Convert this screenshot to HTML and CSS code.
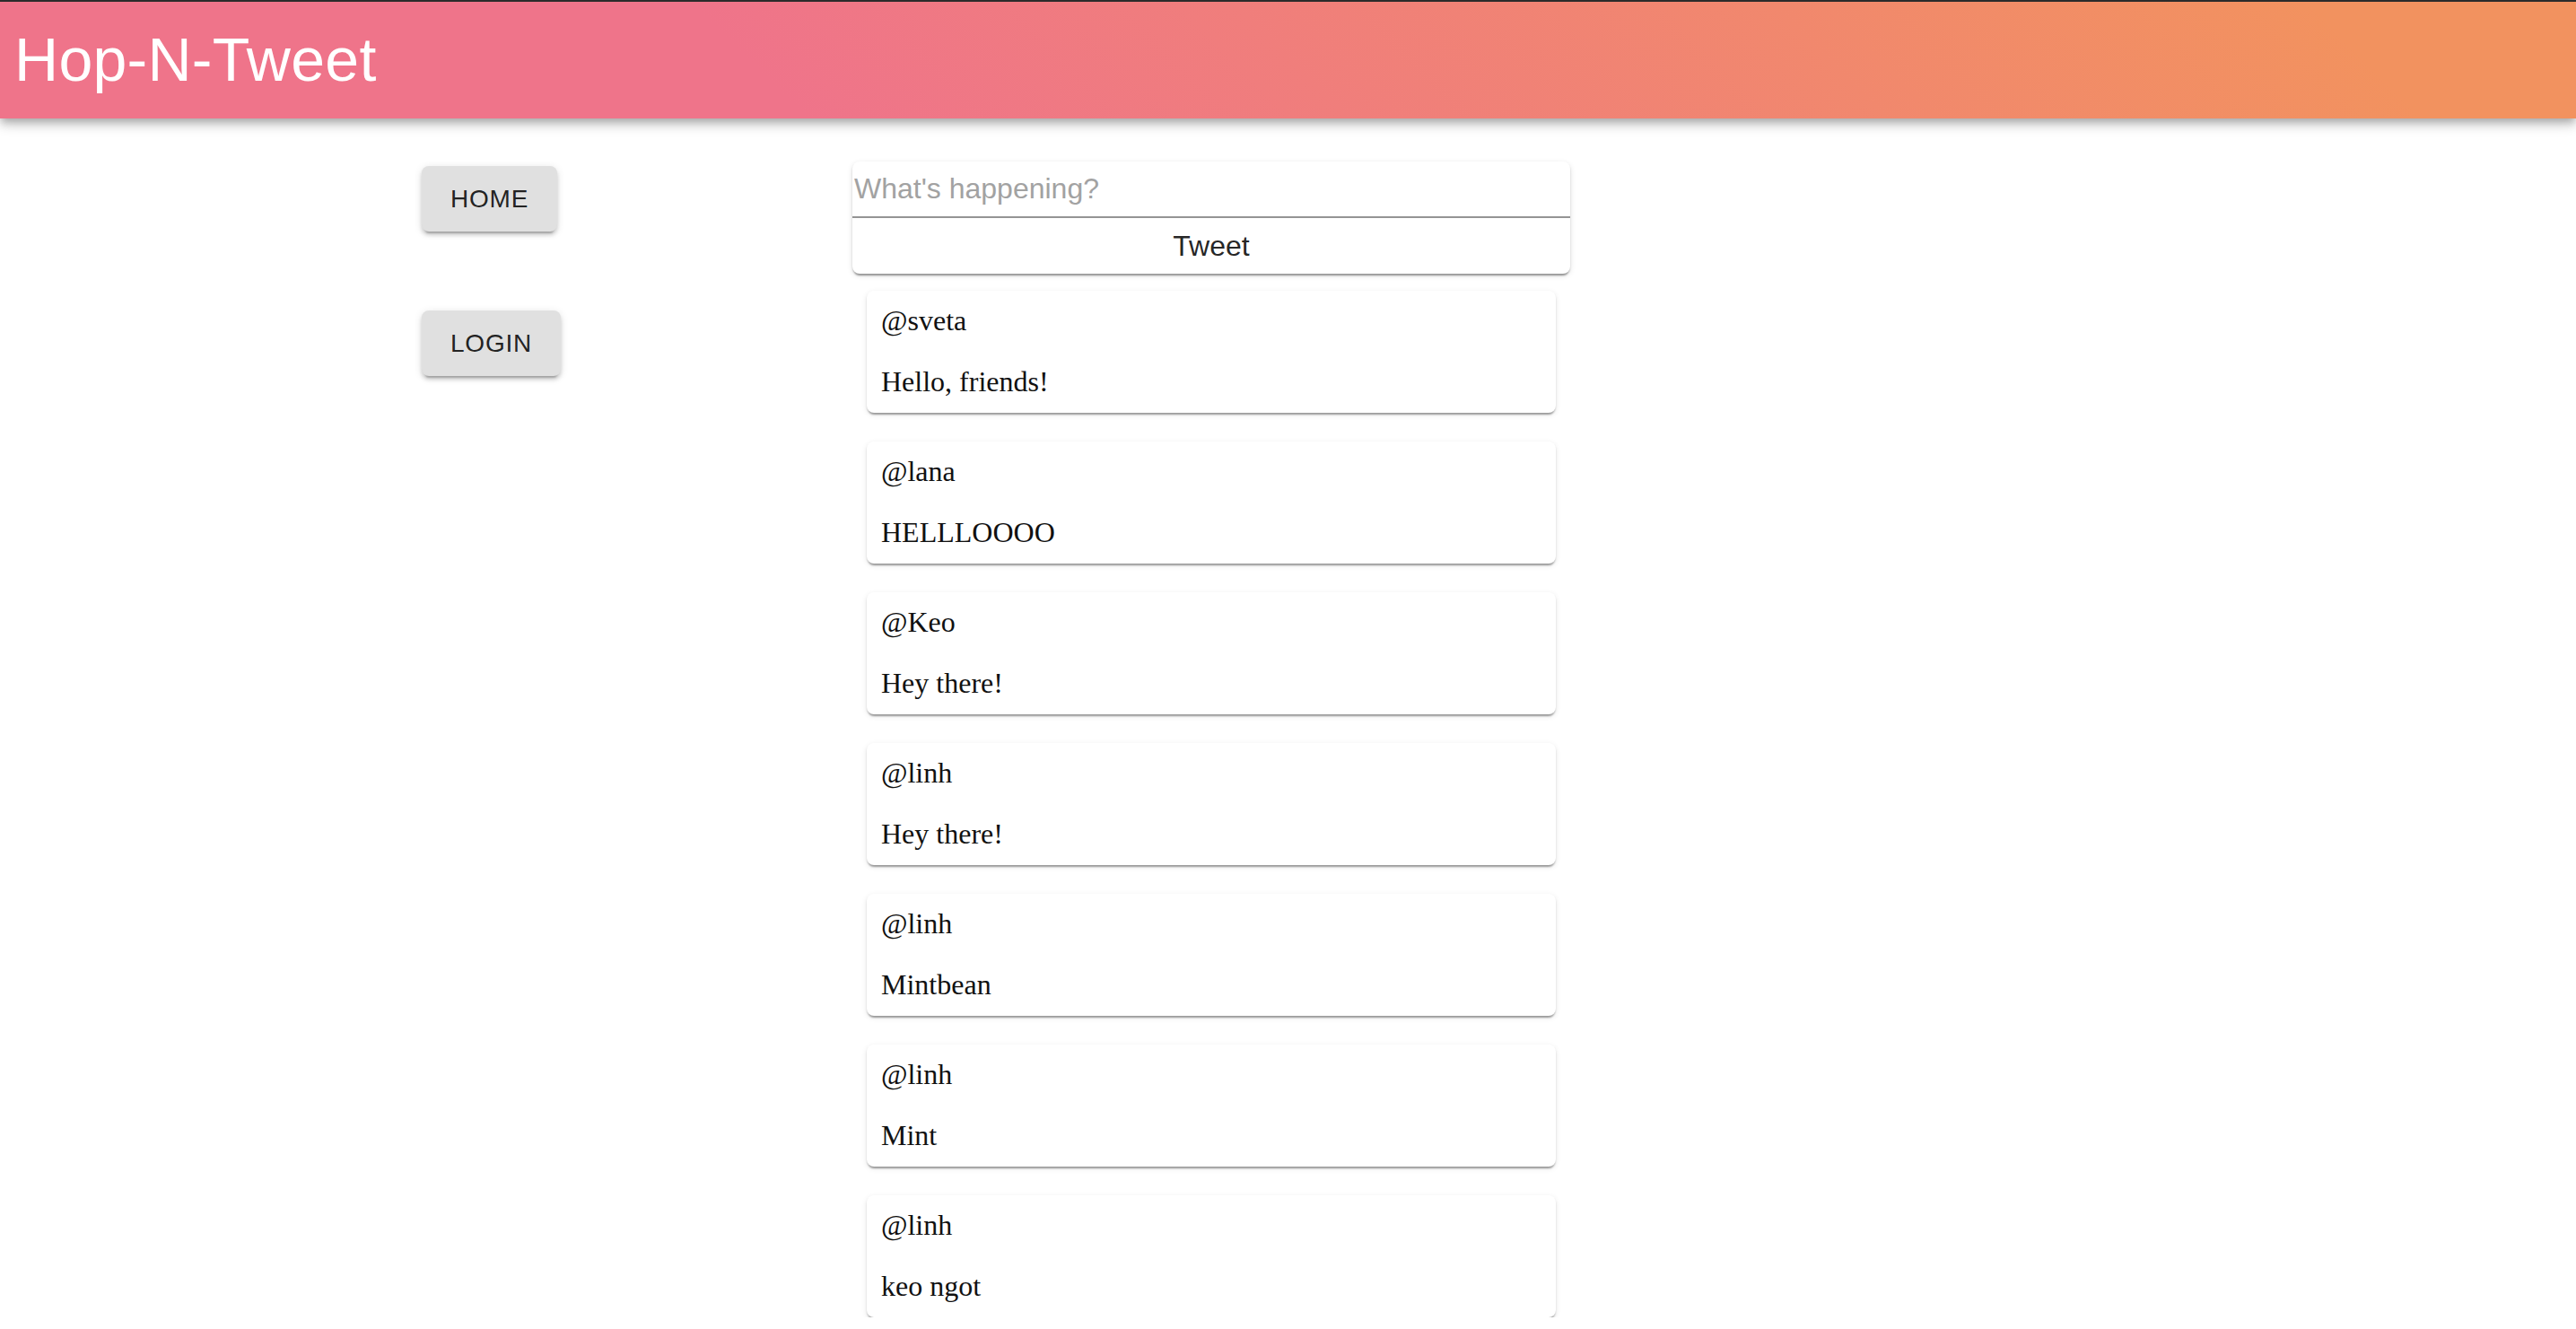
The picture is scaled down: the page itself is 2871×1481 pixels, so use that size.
FILE: index.html
```html
<!DOCTYPE html>
<html lang="en">
<head>
<meta charset="utf-8">
<title>Hop-N-Tweet</title>
<link rel="stylesheet" href="styles.css">
</head>
<body>
<header class="appbar">
  <h1 class="title">Hop-N-Tweet</h1>
</header>
<main class="layout">
  <nav class="sidebar">
    <button class="nav-btn">HOME</button>
    <button class="nav-btn">LOGIN</button>
  </nav>
  <section class="feed">
    <form class="composer">
      <input class="composer-input" type="text" placeholder="What's happening?">
      <button class="composer-btn" type="button">Tweet</button>
    </form>
    <div class="tweets">
      <article class="tweet"><div class="handle">@sveta</div><div class="body">Hello, friends!</div></article>
      <article class="tweet"><div class="handle">@lana</div><div class="body">HELLLOOOO</div></article>
      <article class="tweet"><div class="handle">@Keo</div><div class="body">Hey there!</div></article>
      <article class="tweet"><div class="handle">@linh</div><div class="body">Hey there!</div></article>
      <article class="tweet"><div class="handle">@linh</div><div class="body">Mintbean</div></article>
      <article class="tweet"><div class="handle">@linh</div><div class="body">Mint</div></article>
      <article class="tweet"><div class="handle">@linh</div><div class="body">keo ngot</div></article>
    </div>
  </section>
</main>
</body>
</html>
```
FILE: styles.css
```css
* { box-sizing: border-box; }
body {
  margin: 0;
  background: #fff;
  font-family: "Liberation Sans", Arial, sans-serif;
  color: rgba(0,0,0,0.87);
}
.appbar {
  height: 132px;
  border-top: 2px solid #2b2b2b;
  background: linear-gradient(45deg, #EF748A 30%, #F2925F 90%);
  box-shadow: 0 4px 8px -2px rgba(0,0,0,0.2), 0 8px 10px 0 rgba(0,0,0,0.14), 0 2px 20px 0 rgba(0,0,0,0.12);
  display: flex;
  align-items: center;
  padding-left: 16px;
  position: relative;
  z-index: 2;
}
.title {
  margin: 0 0 2px;
  font-family: "Liberation Sans", Arial, sans-serif;
  font-weight: 400;
  font-size: 68px;
  color: #fff;
  line-height: 1;
  letter-spacing: 0.004em;
}
.layout {
  display: flex;
  padding-left: 470px;
}
.sidebar {
  width: 480px;
  padding-top: 53px;
  display: flex;
  flex-direction: column;
  align-items: flex-start;
  gap: 88px;
}
.nav-btn {
  font-family: "Liberation Sans", Arial, sans-serif;
  font-size: 28px;
  letter-spacing: 0.02857em;
  line-height: 1.75;
  padding: 12px 32px;
  background: #e0e0e0;
  color: rgba(0,0,0,0.87);
  border: 0;
  border-radius: 8px;
  box-shadow: 0 6px 2px -4px rgba(0,0,0,0.2), 0 4px 4px 0 rgba(0,0,0,0.14), 0 2px 10px 0 rgba(0,0,0,0.12);
}
.feed {
  width: 800px;
  padding-top: 48px;
}
.composer {
  margin: 0;
  background: #fff;
  border-radius: 8px;
  box-shadow: 0 4px 2px -2px rgba(0,0,0,0.25), 0 2px 2px 0 rgba(0,0,0,0.16), 0 2px 6px 0 rgba(0,0,0,0.12);
  display: flex;
  flex-direction: column;
}
.composer-input {
  height: 63px;
  border: 0;
  border-bottom: 2px solid #949494;
  padding: 0 2px;
  font-family: "Liberation Sans", Arial, sans-serif;
  font-size: 32px;
  color: rgba(0,0,0,0.87);
  background: transparent;
  outline: none;
}
.composer-input::placeholder { color: #a2a2a2; }
.composer-btn {
  height: 62px;
  border: 0;
  background: transparent;
  font-family: "Liberation Sans", Arial, sans-serif;
  font-size: 32px;
  color: rgba(0,0,0,0.87);
  border-radius: 0 0 8px 8px;
}
.tweets {
  padding: 19px 16px 0;
  display: flex;
  flex-direction: column;
  gap: 32px;
}
.tweet {
  background: #fff;
  border-radius: 8px;
  box-shadow: 0 4px 2px -2px rgba(0,0,0,0.25), 0 2px 2px 0 rgba(0,0,0,0.14), 0 2px 6px 0 rgba(0,0,0,0.1);
  padding: 15px 16px 16px;
  display: flex;
  flex-direction: column;
  gap: 31px;
  font-family: "Liberation Serif", "Times New Roman", serif;
  font-size: 32px;
  color: #111;
}
```
